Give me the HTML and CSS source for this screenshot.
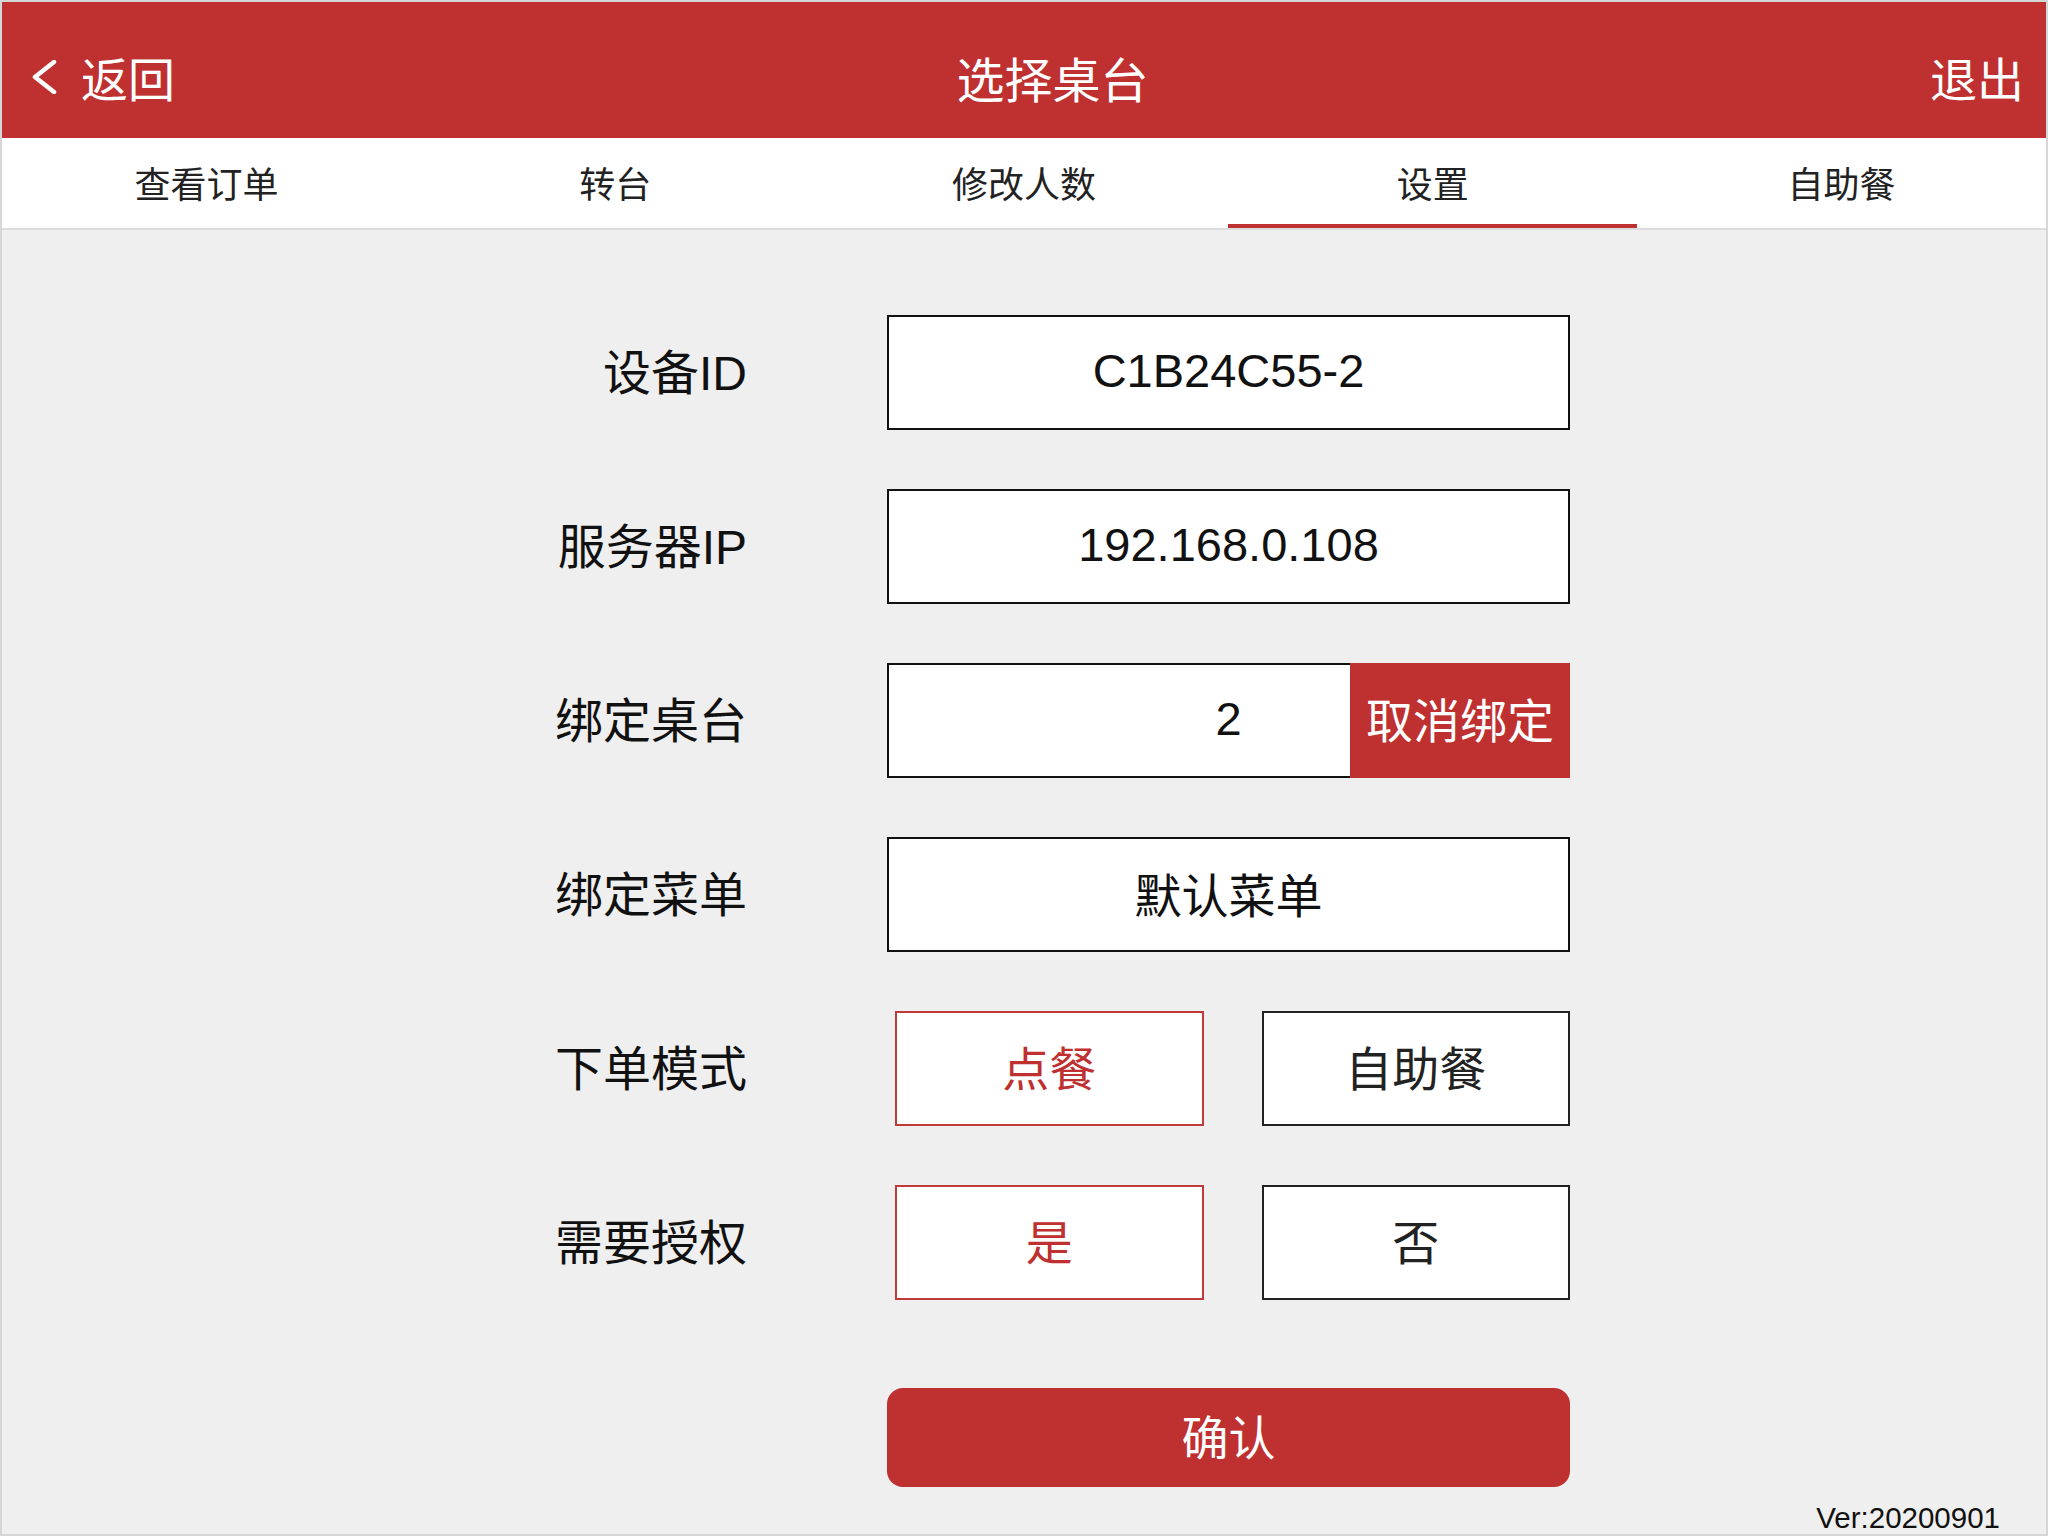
FILE: index.html
```html
<!DOCTYPE html>
<html lang="zh-CN">
<head>
    <meta charset="UTF-8">
    <meta name="viewport" content="width=device-width, initial-scale=1.0">
    <title>选择桌台</title>
    <link rel="stylesheet" href="styles.css">
</head>
<body>
    <div class="app">
        <div class="header">
            <div class="back">
                <svg class="chevron" width="26" height="34" viewBox="0 0 26 34">
                    <polyline points="23,2 4,17 23,32" fill="none" stroke="#fff" stroke-width="4.5" stroke-linecap="round" stroke-linejoin="round"/>
                </svg>
                <span>返回</span>
            </div>
            <div class="title">选择桌台</div>
            <div class="logout">退出</div>
        </div>

        <div class="tabs">
            <div class="tab">查看订单</div>
            <div class="tab">转台</div>
            <div class="tab">修改人数</div>
            <div class="tab active">设置</div>
            <div class="tab">自助餐</div>
        </div>

        <div class="form">
            <div class="label">设备ID</div>
            <div class="field">C1B24C55-2</div>

            <div class="label">服务器IP</div>
            <div class="field">192.168.0.108</div>

            <div class="label">绑定桌台</div>
            <div class="field bind">
                2
                <button type="button" class="unbind">取消绑定</button>
            </div>

            <div class="label">绑定菜单</div>
            <div class="field">默认菜单</div>

            <div class="label">下单模式</div>
            <div class="options">
                <div class="opt on">点餐</div>
                <div class="opt">自助餐</div>
            </div>

            <div class="label">需要授权</div>
            <div class="options">
                <div class="opt on">是</div>
                <div class="opt">否</div>
            </div>

            <button type="button" class="confirm">确认</button>
        </div>

        <div class="ver">Ver:20200901</div>
    </div>
</body>
</html>
```

FILE: styles.css
```css
body {
    margin: 0;
    font-family: "Liberation Sans", "Noto Sans CJK SC", sans-serif;
}

.app {
    height: 1536px;
    box-sizing: border-box;
    border: 2px solid #d6d6d6;
    background-color: #efefef;
    display: flex;
    flex-direction: column;
}

.header {
    height: 136px;
    box-sizing: border-box;
    padding: 13px 22px 0 29px;
    background-color: #bf3030;
    color: #fff;
    display: flex;
    align-items: center;
    font-size: 47px;
}

.back {
    display: flex;
    align-items: center;
}

.chevron {
    margin-right: 24px;
}

.title {
    flex: 1;
    text-align: center;
    font-size: 48px;
}

.tabs {
    height: 90px;
    background-color: #fff;
    border-bottom: 2px solid #dcdcdc;
    display: flex;
}

.tab {
    flex: 1;
    position: relative;
    display: flex;
    align-items: center;
    justify-content: center;
    padding-bottom: 3px;
    font-size: 36px;
    color: #222;
}

.tab.active::after {
    content: "";
    position: absolute;
    left: 0;
    right: 0;
    bottom: 0;
    height: 4px;
    background-color: #bf3030;
}

.form {
    padding-top: 85px;
    display: grid;
    grid-template-columns: 745px 683px;
    grid-template-rows: repeat(6, 115px) 128px;
    column-gap: 140px;
    row-gap: 59px;
}

.label {
    display: flex;
    align-items: center;
    justify-content: flex-end;
    padding-bottom: 7px;
    font-size: 48px;
    color: #111;
}

.field {
    box-sizing: border-box;
    border: 2px solid #111;
    background-color: #fff;
    display: flex;
    align-items: center;
    justify-content: center;
    padding-bottom: 4px;
    font-size: 47px;
    color: #111;
}

.field.bind {
    position: relative;
}

.unbind {
    position: absolute;
    top: -2px;
    right: -2px;
    bottom: -2px;
    width: 220px;
    border: none;
    padding: 0 0 6px;
    background-color: #bf3030;
    color: #fff;
    font-family: inherit;
    font-size: 47px;
}

.options {
    display: flex;
    gap: 58px;
    padding-left: 8px;
}

.opt {
    flex: 1;
    box-sizing: border-box;
    border: 2px solid #222;
    background-color: #fff;
    display: flex;
    align-items: center;
    justify-content: center;
    padding-bottom: 6px;
    font-size: 47px;
    color: #222;
}

.opt.on {
    border-color: #c03a3a;
    color: #bf3030;
}

.confirm {
    grid-column: 2;
    margin-top: 29px;
    border: none;
    border-radius: 16px;
    padding: 0 0 6px;
    background-color: #bf3030;
    color: #fff;
    font-family: inherit;
    font-size: 47px;
}

.ver {
    margin-top: auto;
    padding-right: 46px;
    text-align: right;
    font-size: 29.5px;
    line-height: 32px;
    color: #111;
}
```
